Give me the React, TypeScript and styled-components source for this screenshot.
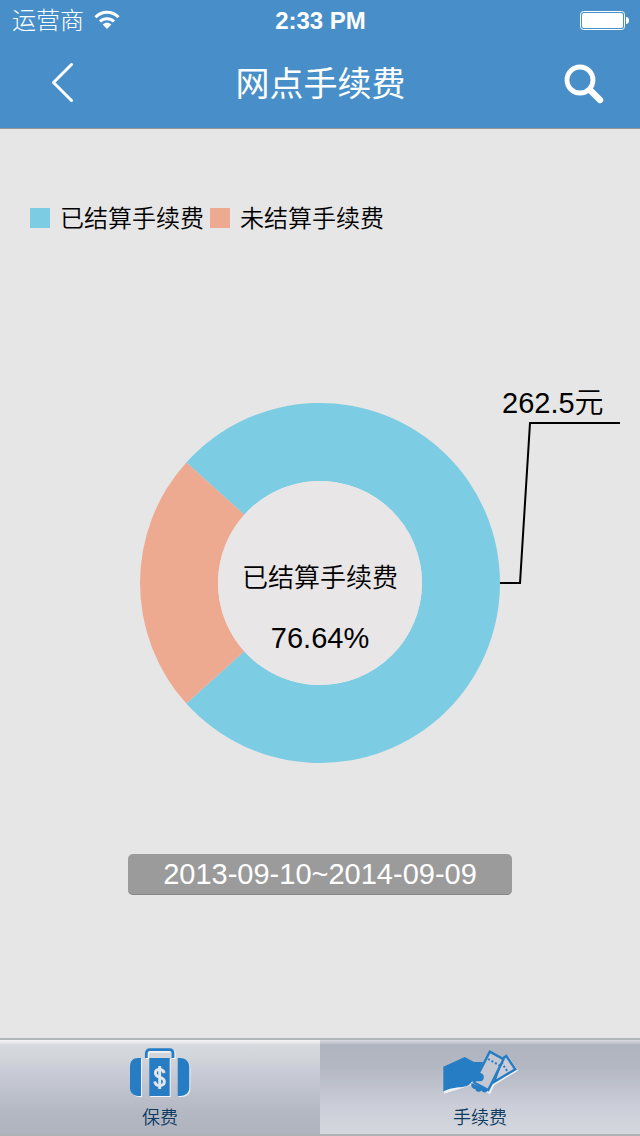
import React from "react";
import styled, { createGlobalStyle } from "styled-components";

const colors = {
  bar: "#488fc9",
  page: "#e6e6e6",
  hole: "#e8e6e7",
  settled: "#7ccce3",
  unsettled: "#edaa91",
  icon: "#267dc3",
  label: "#0c3a61",
};

const GlobalStyle = createGlobalStyle`
  * { box-sizing: border-box; }
  body {
    margin: 0;
    background: ${colors.page};
    font-family: "Liberation Sans", "Noto Sans CJK SC", sans-serif;
    font-weight: 350;
    color: #000;
  }
  button { font: inherit; border: 0; padding: 0; margin: 0; background: none; cursor: pointer; }
`;

const Screen = styled.div`
  display: flex;
  flex-direction: column;
  min-height: 100vh;
`;

const Header = styled.header`
  background: ${colors.bar};
  border-bottom: 1px solid #949698;
  color: #fff;
`;

const StatusBar = styled.div`
  display: grid;
  grid-template-columns: 1fr auto 1fr;
  align-items: center;
  height: 40px;
  padding: 0 11px 0 12px;
  font-size: 24px;
  line-height: 42px;
`;

const Carrier = styled.div`
  display: flex;
  align-items: center;
  gap: 10px;
  font-weight: 300;
`;

const Clock = styled.time`
  font-weight: 700;
`;

const BatterySlot = styled.div`
  display: flex;
  justify-content: flex-end;
`;

const NavBar = styled.div`
  display: grid;
  grid-template-columns: 1fr auto 1fr;
  align-items: center;
  height: 88px;
  padding: 0 35px 0 50px;
`;

const Title = styled.h1`
  margin: 0;
  padding-right: 14px;
  font-size: 34px;
  line-height: 48px;
  font-weight: 400;
`;

const IconButton = styled.button<{ $align: "start" | "end" }>`
  display: flex;
  justify-self: ${(p) => p.$align};
`;

const Content = styled.main`
  flex: 1;
  display: flex;
  flex-direction: column;
  padding-top: 72px;
`;

const Legend = styled.ul`
  display: flex;
  gap: 6px;
  margin: 0;
  padding: 0 30px;
  list-style: none;
`;

const LegendItem = styled.li`
  display: flex;
  align-items: center;
  gap: 10px;
  font-size: 24px;
  line-height: 36px;
`;

const Swatch = styled.span<{ $color: string }>`
  width: 20px;
  height: 20px;
  margin-bottom: 2px;
  background: ${(p) => p.$color};
`;

const Chart = styled.svg`
  display: block;
  width: 100%;
  margin-top: 146px;
`;

const ChartText = styled.text<{ $size: number }>`
  font-size: ${(p) => p.$size}px;
`;

const DateButton = styled.button`
  align-self: center;
  width: 60%;
  margin-top: 71px;
  && {
    background: #9b9b9b;
    border-radius: 5px;
    border-bottom: 1px solid #858585;
  }
  color: #fff;
  font-size: 29px;
  line-height: 40px;
`;

const TabBar = styled.nav`
  display: grid;
  grid-template-columns: 1fr 1fr;
  border-top: 2px solid #b0b5b8;
  border-bottom: 2px solid #adb2b5;
`;

const Tab = styled.button<{ $active: boolean }>`
  && {
    background: ${(p) =>
      p.$active
        ? "linear-gradient(#d8dae0 0, #c3c6cf 3px, #afb4bf 5px, #b4b8c3 30%, #cbced8 70%, #d4d7dc 100%)"
        : "linear-gradient(#f4f5f6 0, #e5e6e9 3px, #d6d9dd 5px, #cfd2d6 24%, #cbced8 30%, #b4b8c2 75%, #afb3bf 100%)"};
  }
  display: flex;
  flex-direction: column;
  align-items: center;
  height: 94px;
  padding-top: 7px;
  gap: 4px;
  color: ${colors.label};
  font-size: 18px;
  line-height: 26px;
`;

const TabIcon = styled.svg`
  display: block;
`;

const CX = 320;
const CY = 200;
const R = 180;
const HOLE = 102;
const PERCENT = 76.64;

function point(radius: number, angle: number) {
  return `${CX + radius * Math.cos(angle)} ${CY + radius * Math.sin(angle)}`;
}

function ring(from: number, to: number) {
  const large = to - from > Math.PI ? 1 : 0;
  return `M${point(R, from)} A${R} ${R} 0 ${large} 1 ${point(R, to)} L${point(HOLE, to)} A${HOLE} ${HOLE} 0 ${large} 0 ${point(HOLE, from)} Z`;
}

function DonutChart() {
  const half = (PERCENT / 100) * Math.PI;
  return (
    <Chart viewBox="0 0 640 400" role="img" aria-label="手续费">
      <path d={ring(-half, half)} fill={colors.settled} />
      <path d={ring(half, 2 * Math.PI - half)} fill={colors.unsettled} />
      <circle cx={CX} cy={CY} r={HOLE} fill={colors.hole} />
      <path d="M500 200H520L530 40H620" fill="none" stroke="#000" strokeWidth="2" />
      <ChartText $size={29} x="502" y="30">262.5元</ChartText>
      <ChartText $size={26} x={CX} y="204" textAnchor="middle">已结算手续费</ChartText>
      <ChartText $size={29} x={CX} y="265" textAnchor="middle">{PERCENT}%</ChartText>
    </Chart>
  );
}

function WifiIcon() {
  return (
    <svg width="26" height="22" viewBox="0 0 26 22" fill="none" stroke="#fff" strokeWidth="3">
      <path d="M1.5 7.2C8 .6 18 .6 24.5 7.2" />
      <path d="M6 11.5C10 7.7 16 7.7 20 11.5" />
      <path d="M8.7 14.6C11.2 12.2 14.800 12.2 17.3 14.6L13 19Z" fill="#fff" stroke="none" />
    </svg>
  );
}

function BatteryIcon() {
  return (
    <svg width="49" height="21" viewBox="0 0 49 21">
      <rect x=".5" y=".5" width="44" height="18" rx="3" fill="none" stroke="#fff" />
      <rect x="2" y="2" width="41" height="15" rx="2" fill="#fff" />
      <path d="M46 6C48 6 49 7.5 49 9.5S48 13 46 13Z" fill="#fff" />
    </svg>
  );
}

function BackIcon() {
  return (
    <svg width="26" height="42" viewBox="0 0 26 42" fill="none" stroke="#fff" strokeWidth="3" strokeLinecap="round" strokeLinejoin="round">
      <path d="M21.5 1.5L3.5 19.5L21.5 37.5" />
    </svg>
  );
}

function SearchIcon() {
  return (
    <svg width="41" height="40" viewBox="0 0 41 40" fill="none" stroke="#fff" strokeLinecap="round">
      <circle cx="16" cy="16" r="13" strokeWidth="4.8" />
      <path d="M27 27L36 36" strokeWidth="6.4" />
    </svg>
  );
}

const CASE_BODY = [
  "M13 11V49H10C5 49 2 45 2 41V20C2 14 5 11 10 11Z",
  "M21.3 11H41.7V49H21.3Z",
  "M49.7 11H52C58 11 61.3 15 61.3 20V41C61.3 46 57 49 52 49H49.7Z",
];

function CaseIcon() {
  return (
    <TabIcon width="64" height="54" viewBox="0 0 64 54">
      <g fill="#f1f3f6" transform="translate(1 1)">
        {CASE_BODY.map((d) => (
          <path key={d} d={d} />
        ))}
      </g>
      <path d="M19.5 12V7Q19.5 4 22.5 4H42.500Q46 4 46 7.500V12" fill="none" stroke="#f1f3f6" strokeWidth="3.500" />
      <g fill={colors.icon}>
        {CASE_BODY.map((d) => (
          <path key={d} d={d} />
        ))}
      </g>
      <path d="M18.3 11V6.500Q18.3 2.700 22 2.700H41.500Q45 2.700 45 6.500V11" fill="none" stroke={colors.icon} strokeWidth="2.800" />
      <path d="M36.300 26C35.500 23.500 34 22.400 31.700 22.400C29 22.400 27.400 23.800 27.400 26C27.400 31.800 36.400 28.800 36.400 34.600C36.400 37 34.600 38.600 31.700 38.600C28.800 38.600 27.200 37 26.700 34.400M31.700 19V42" fill="none" stroke="#e3e6ec" strokeWidth="2.900" />
    </TabIcon>
  );
}

function HandIcon() {
  return (
    <TabIcon width="76" height="54" viewBox="0 0 76 54">
      <g transform="translate(1 1.500)" fill="#f1f3f6" stroke="#f1f3f6">
        <path d="M1.300 20L22.700 10L32 15L39 32L28 36L13 41L1.300 44.500Z" />
        <path d="M47.300 4L62 12L46.500 44L31 35.500Z" strokeWidth="2" />
        <path d="M64.500 8.500L73.500 22L52 35Z" strokeWidth="2" />
      </g>
      <path d="M64.300 9L73.300 22.300L52 35L60 12Z" fill="#cbced8" stroke={colors.icon} strokeWidth="2.400" />
      <path d="M59.500 15.500L67.500 27.500" fill="none" stroke={colors.icon} strokeWidth="2" strokeDasharray="2 2" />
      <path d="M29.500 36L46 43C44 46.500 41 46 39.500 43.500C37 46 33 44.500 33.500 42C30.500 42 28.500 39.500 29.500 36Z" fill={colors.icon} />
      <path d="M47.800 4.600L61.500 12.200L46.300 43L32 35.500Z" fill="#c3c7d1" stroke={colors.icon} strokeWidth="2.400" />
      <path d="M46 12L59.500 19.500" fill="none" stroke={colors.icon} strokeWidth="2" strokeDasharray="2 2" />
      <path d="M1.300 19.800L22.700 10L32 15H41L36.500 26H38.500C43 26.500 43 34 38.500 34.300C35 34.500 32 34 29.500 35C26 42.500 14 38 1.300 44.500Z" fill={colors.icon} />
    </TabIcon>
  );
}

const legend = [
  { label: "已结算手续费", color: colors.settled },
  { label: "未结算手续费", color: colors.unsettled },
];

export default function App() {
  const [active, setActive] = React.useState("fee");
  return (
    <Screen>
      <GlobalStyle />
      <Header>
        <StatusBar>
          <Carrier>
            <span>运营商</span>
            <WifiIcon />
          </Carrier>
          <Clock>2:33 PM</Clock>
          <BatterySlot>
            <BatteryIcon />
          </BatterySlot>
        </StatusBar>
        <NavBar>
          <IconButton $align="start" aria-label="返回">
            <BackIcon />
          </IconButton>
          <Title>网点手续费</Title>
          <IconButton $align="end" aria-label="搜索">
            <SearchIcon />
          </IconButton>
        </NavBar>
      </Header>
      <Content>
        <Legend>
          {legend.map((item) => (
            <LegendItem key={item.label}>
              <Swatch $color={item.color} />
              {item.label}
            </LegendItem>
          ))}
        </Legend>
        <DonutChart />
        <DateButton>2013-09-10~2014-09-09</DateButton>
      </Content>
      <TabBar>
        <Tab $active={active === "premium"} onClick={() => setActive("premium")}>
          <CaseIcon />
          保费
        </Tab>
        <Tab $active={active === "fee"} onClick={() => setActive("fee")}>
          <HandIcon />
          手续费
        </Tab>
      </TabBar>
    </Screen>
  );
}
